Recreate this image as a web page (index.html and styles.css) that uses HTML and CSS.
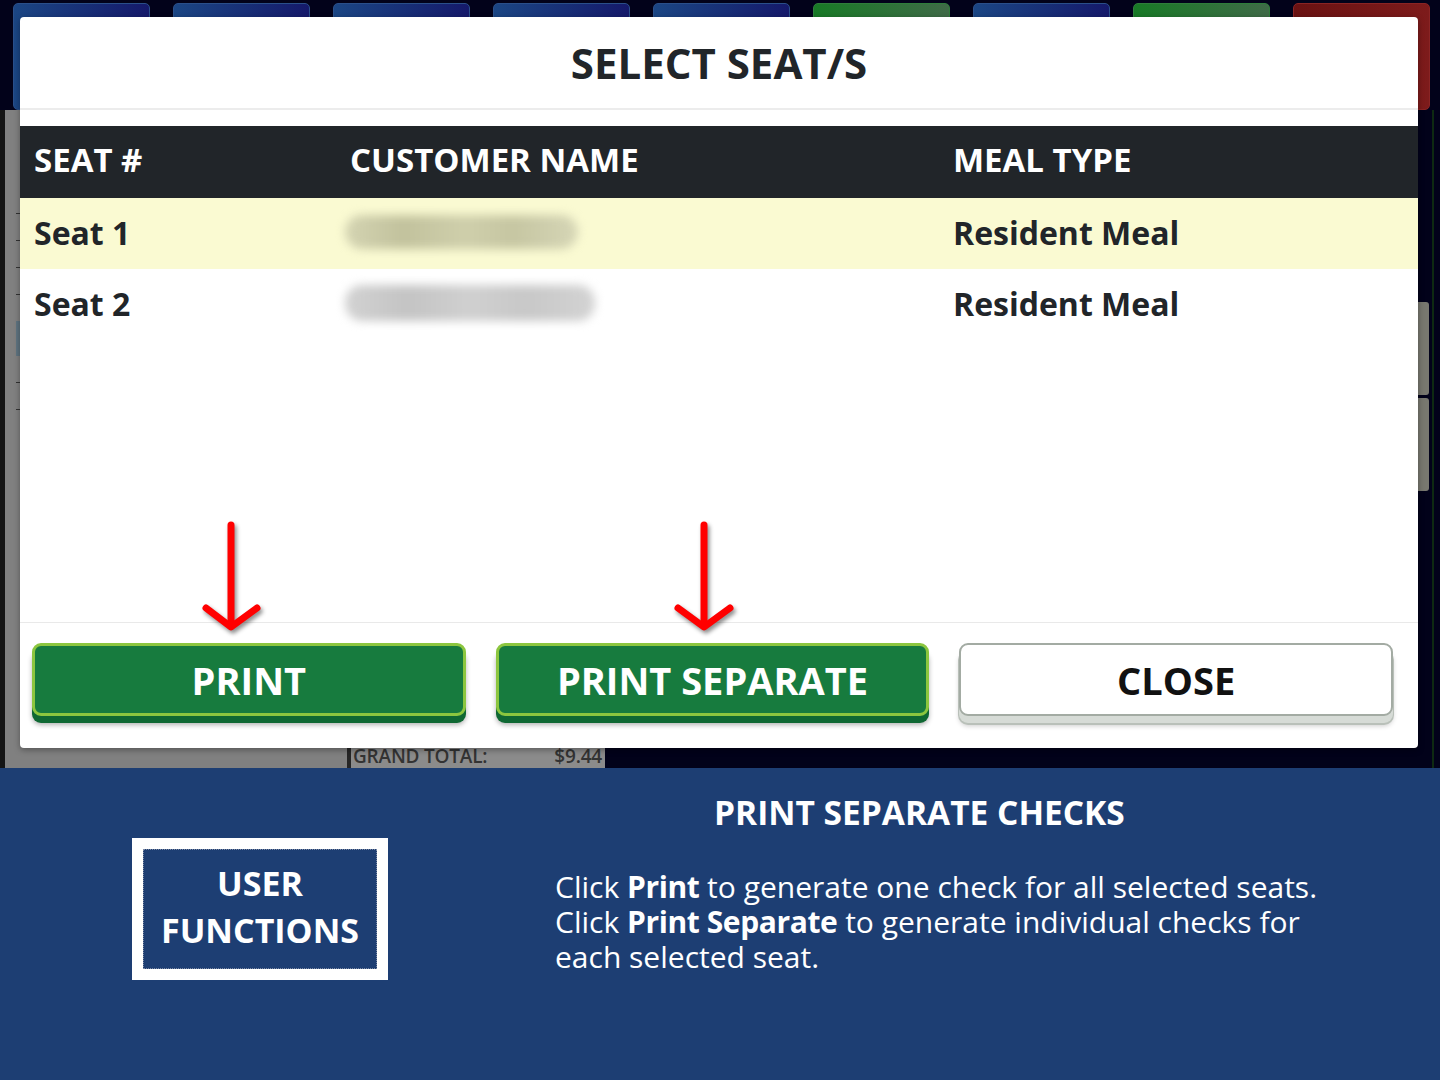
FILE: index.html
```html
<!DOCTYPE html>
<html lang="en">
<head>
<meta charset="utf-8">
<title>Print Separate Checks</title>
<link rel="stylesheet" href="styles.css">
</head>
<body>
<div class="slide">
  <div class="app">
    <div class="topbar">
      <div class="tb"></div>
      <div class="tb"></div>
      <div class="tb"></div>
      <div class="tb"></div>
      <div class="tb"></div>
      <div class="tb green"></div>
      <div class="tb"></div>
      <div class="tb green"></div>
      <div class="tb red"></div>
    </div>
    <div class="app-body">
      <div class="left-edge"></div>
      <div class="left-panel">
        <div class="ticks">
          <span class="tick"></span>
          <span class="tick"></span>
          <span class="tick"></span>
          <span class="tick"></span>
          <span class="tick bar"></span>
          <span class="tick"></span>
          <span class="tick"></span>
        </div>
        <div class="grand"><span>GRAND TOTAL:</span><span>$9.44</span></div>
      </div>
      <div class="right-rail">
        <div class="rail-btn"></div>
        <div class="rail-btn"></div>
      </div>
      <div class="right-line"></div>
    </div>

    <div class="modal">
      <div class="modal-head">
        <h1 class="modal-title">SELECT SEAT/S</h1>
      </div>
      <div class="table">
        <div class="thead">
          <div>SEAT #</div>
          <div>CUSTOMER NAME</div>
          <div>MEAL TYPE</div>
        </div>
        <div class="row sel">
          <div>Seat 1</div>
          <div><div class="blur blur-1"></div></div>
          <div>Resident Meal</div>
        </div>
        <div class="row">
          <div>Seat 2</div>
          <div><div class="blur blur-2"></div></div>
          <div>Resident Meal</div>
        </div>
      </div>
      <div class="spacer"></div>
      <div class="modal-foot">
        <div class="btn btn-green">PRINT</div>
        <div class="btn btn-green">PRINT SEPARATE</div>
        <div class="btn btn-white">CLOSE</div>
      </div>
    </div>

    <svg class="arrows" width="1440" height="768" viewBox="0 0 1440 768">
      <g fill="none" stroke="#ff0000" stroke-width="7" stroke-linecap="round" stroke-linejoin="round">
        <path d="M231 525 V626"/>
        <path d="M206 608 L231 627 L257 608"/>
        <path d="M704 525 V626"/>
        <path d="M678 608 L704 627 L730 608"/>
      </g>
    </svg>
  </div>

  <div class="caption">
    <div class="uf-box">
      <div class="uf-inner">
        <span>USER</span>
        <span>FUNCTIONS</span>
      </div>
    </div>
    <div class="info">
      <h2 class="info-title">PRINT SEPARATE CHECKS</h2>
      <p class="info-text">Click <b>Print</b> to generate one check for all selected seats. Click <b>Print Separate</b> to generate individual checks for each selected seat.</p>
    </div>
  </div>
</div>
</body>
</html>
```

FILE: styles.css
```css
* { box-sizing: border-box; margin: 0; padding: 0; }
html, body { width: 1440px; height: 1080px; overflow: hidden; }
body { font-family: "Open Sans", "DejaVu Sans", sans-serif; background: #1d3e73; }

.slide { width: 1440px; height: 1080px; display: flex; flex-direction: column; }

/* background application */
.app { position: relative; height: 768px; flex: none; background: #02021a; display: flex; flex-direction: column; overflow: hidden; }
.topbar { height: 110px; flex: none; display: flex; gap: 23px; padding: 3px 0 0 13px; }
.tb { width: 137px; height: 107px; border-radius: 5px; border: 1px solid #2a4f8a; background: linear-gradient(90deg, #1b4684, #15196a); }
.tb.green { border-color: #2f7d3b; background: linear-gradient(90deg, #187a26, #3f6a47); }
.tb.red { border-color: #8a2424; background: linear-gradient(90deg, #6a1212, #7d1b1b); }

.app-body { flex: 1; display: flex; }
.left-edge { width: 5px; background: #141414; }
.left-panel { width: 600px; background: #808080; display: flex; flex-direction: column; }
.ticks { display: flex; flex-direction: column; gap: 26px; padding: 103px 0 0 11px; }
.tick { display: block; width: 4px; height: 1px; background: #333; }
.tick.bar { height: 35px; background: #5f7480; }
.grand { margin-top: auto; margin-left: 342px; width: 258px; height: 26px; background: #8b8b8b; border-left: 4px solid #262626; display: flex; justify-content: space-between; align-items: flex-end; padding: 0 3px 0 2px; font-size: 19px; font-weight: 600; line-height: 24px; color: #333; letter-spacing: -0.2px; }
.right-rail { margin-left: auto; width: 14px; padding-top: 192px; display: flex; flex-direction: column; gap: 3px; }
.rail-btn { height: 93px; background: #78786f; border-radius: 0 3px 3px 0; }
.right-line { width: 8px; margin-left: 3px; border-left: 2px solid #0e2a12; }

/* modal */
.modal { position: absolute; left: 20px; top: 17px; width: 1398px; height: 731px; background: #fff; border-radius: 4px; display: flex; flex-direction: column; box-shadow: 0 2px 6px rgba(0,0,0,0.35); overflow: hidden; }
.modal-head { height: 93px; flex: none; border-bottom: 2px solid #ececec; display: flex; align-items: center; justify-content: center; }
.modal-title { font-size: 42px; font-weight: 700; color: #212529; line-height: 1; padding-bottom: 0; }
.table { margin-top: 16px; flex: none; }
.thead, .row { display: grid; grid-template-columns: 316px 603px 1fr; align-items: center; padding-left: 14px; }
.thead { height: 72px; background: #212529; color: #fff; font-size: 33px; font-weight: 700; padding-bottom: 5px; }
.row { height: 71px; color: #212529; font-size: 32px; font-weight: 700; padding-bottom: 3px; }
.row.sel { background: #fafad2; }
.blur { height: 34px; border-radius: 17px; filter: blur(5px); margin-left: -5px; }
.blur-1 { width: 233px; background: linear-gradient(90deg, #d4d4b2 0%, #c2c29d 25%, #cfcfab 52%, #c6c6a2 72%, #d6d6b6 100%); }
.blur-2 { width: 250px; height: 36px; background: linear-gradient(90deg, #d2d2d2 0%, #c4c4c4 25%, #d0d0d0 50%, #c8c8c8 72%, #d3d3d3 100%); }
.spacer { flex: 1; }
.modal-foot { height: 126px; flex: none; border-top: 1px solid #e9e9e9; display: grid; grid-template-columns: repeat(3, 1fr); gap: 30px; padding: 20px 25px 0 12px; align-items: start; }
.btn { height: 73px; border-radius: 9px; font-size: 38px; font-weight: 700; display: flex; align-items: center; justify-content: center; line-height: 1; padding-bottom: 0; }
.btn-green { background: #177b3e; border: 3px solid #8cc63f; color: #fff; box-shadow: 0 7px 0 #0f6833, 0 9px 5px rgba(0,0,0,0.3); }
.btn-white { background: #fff; border: 2px solid #a3aba3; color: #111; box-shadow: 0 7px 0 #d6dbd6, 0 8px 0 1px #b9c0b9, 0 10px 5px rgba(0,0,0,0.2); }

.arrows { position: absolute; left: 0; top: 0; pointer-events: none; filter: drop-shadow(2px 3px 2px rgba(0,0,0,0.45)); }

/* caption */
.caption { flex: 1; display: flex; align-items: flex-start; color: #fff; }
.uf-box { margin: 70px 0 0 132px; width: 256px; height: 142px; border: 11px solid #fff; display: flex; }
.uf-inner { flex: 1; border: 1px dotted #7d8aa5; display: flex; flex-direction: column; align-items: center; justify-content: center; font-size: 34px; font-weight: 700; line-height: 47px; padding-bottom: 4px; }
.info { margin-left: 167px; padding-top: 24px; }
.info-title { font-size: 33.5px; font-weight: 700; line-height: 40px; margin-left: 159px; }
.info-text { margin-top: 37px; width: 790px; font-size: 30px; line-height: 35px; font-weight: 400; }
.info-text b { font-weight: 700; letter-spacing: -0.4px; }
```
